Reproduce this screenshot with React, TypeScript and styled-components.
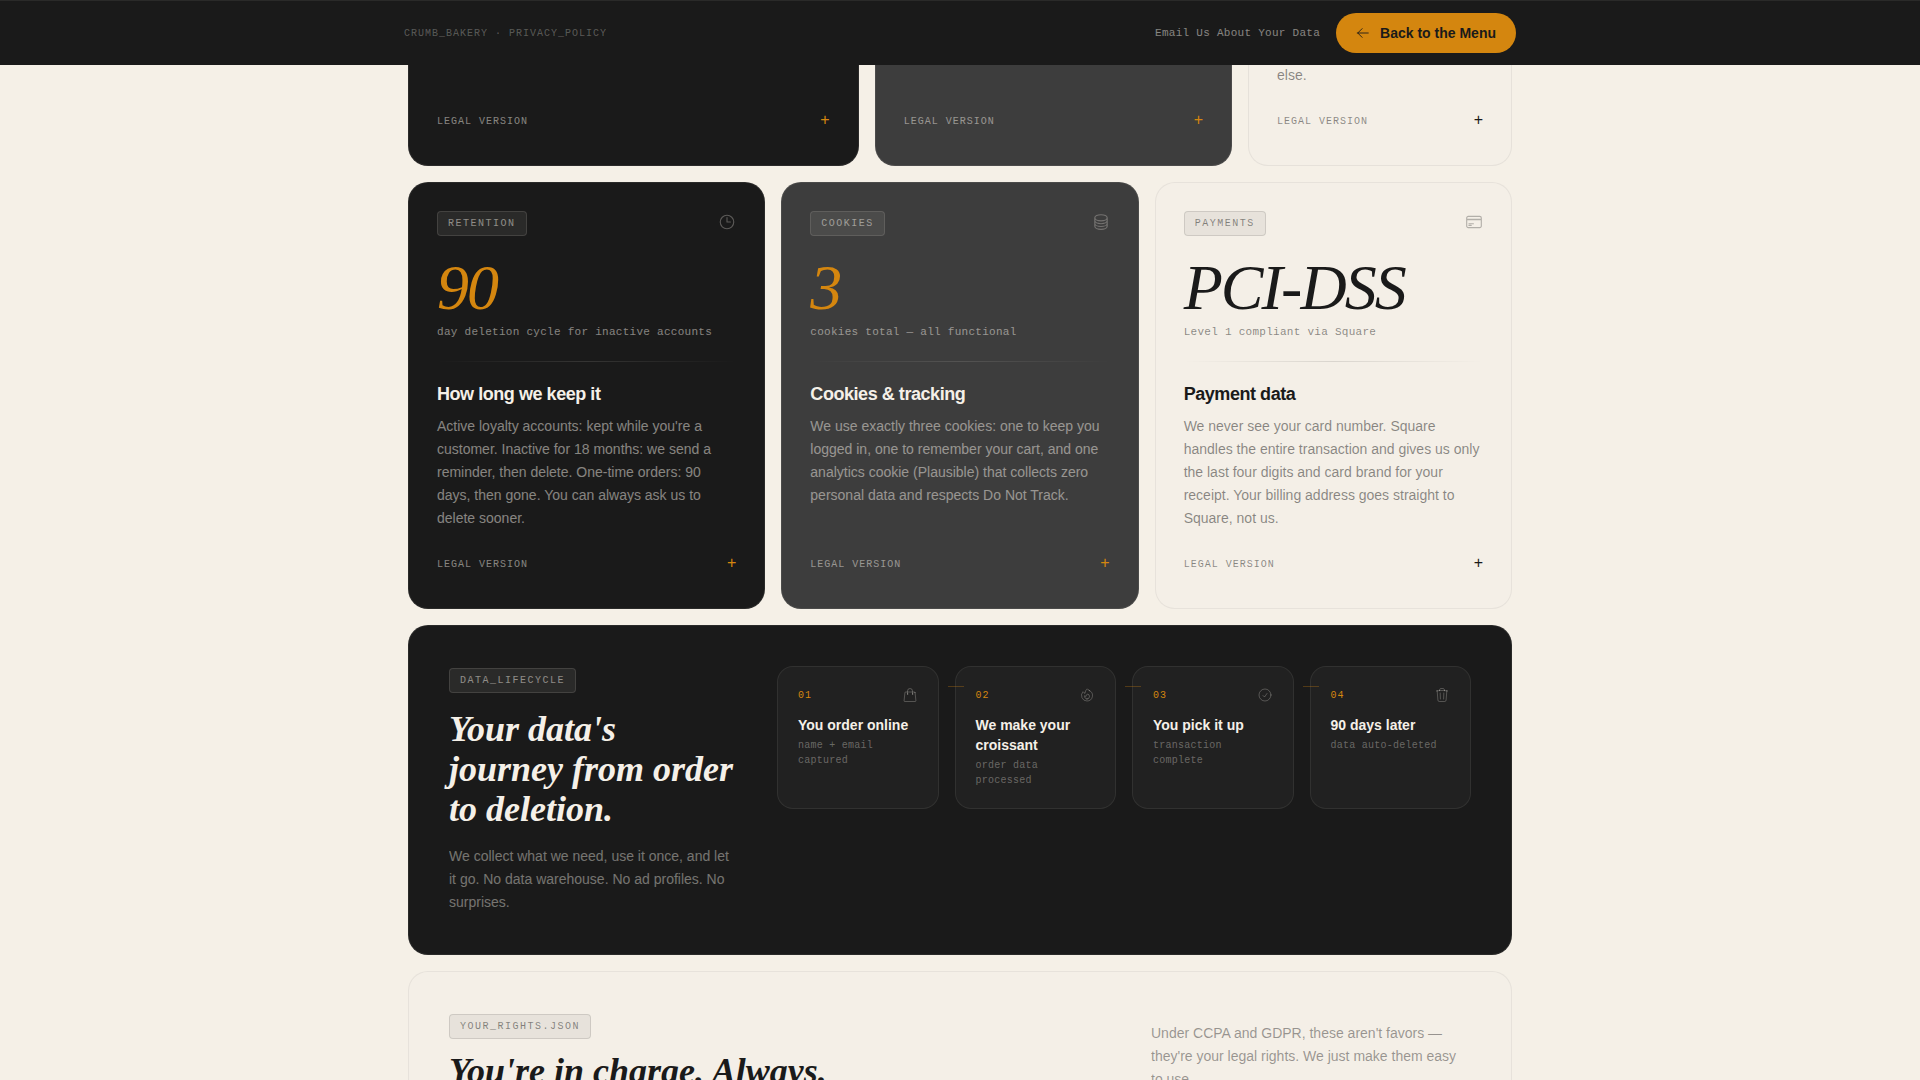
import React from "react";
import styled, { createGlobalStyle, ThemeProvider, css } from "styled-components";
import type { IconType } from "react-icons";
import {
  HiOutlineArrowLeft,
  HiOutlineCheckCircle,
  HiOutlineCircleStack,
  HiOutlineClock,
  HiOutlineCreditCard,
  HiOutlineFire,
  HiOutlineShoppingBag,
  HiOutlineTrash,
} from "react-icons/hi2";

type Tone = "dark" | "char" | "light";

const theme = {
  cream: "#f5f0e8",
  ink: "#1a1a1a",
  char: "#3d3d3d",
  amber: "#d4860f",
  sans: '"Liberation Sans", Arial, sans-serif',
  serif: '"Liberation Serif", "Times New Roman", serif',
  mono: '"Liberation Mono", "Courier New", monospace',
};

const tones = {
  dark: {
    bg: theme.ink,
    line: "rgba(245, 240, 232, 0.08)",
    title: theme.cream,
    accent: theme.amber,
    text: "rgba(245, 240, 232, 0.5)",
    tagBg: "rgba(245, 240, 232, 0.08)",
    tagLine: "rgba(245, 240, 232, 0.12)",
    icon: "rgba(245, 240, 232, 0.3)",
  },
  char: {
    bg: theme.char,
    line: "rgba(245, 240, 232, 0.08)",
    title: theme.cream,
    accent: theme.amber,
    text: "rgba(245, 240, 232, 0.5)",
    tagBg: "rgba(245, 240, 232, 0.08)",
    tagLine: "rgba(245, 240, 232, 0.12)",
    icon: "rgba(245, 240, 232, 0.3)",
  },
  light: {
    bg: "#f4efe7",
    line: "rgba(26, 26, 26, 0.06)",
    title: theme.ink,
    accent: theme.ink,
    text: "rgba(26, 26, 26, 0.5)",
    tagBg: "rgba(26, 26, 26, 0.06)",
    tagLine: "rgba(26, 26, 26, 0.12)",
    icon: "rgba(26, 26, 26, 0.3)",
  },
};

const GlobalStyle = createGlobalStyle`
  *, *::before, *::after { box-sizing: border-box; }
  body {
    margin: 0;
    background: #f5f0e7;
    color: ${theme.ink};
    font-family: ${theme.sans};
  }
  h2, h3, p, ol { margin: 0; padding: 0; }
  a { text-decoration: none; }
`;

const TopBar = styled.header`
  position: fixed;
  inset: 0 0 auto;
  z-index: 10;
  background: ${(p) => p.theme.ink};
  border-top: 1px solid rgba(245, 240, 232, 0.08);
`;

const TopBarInner = styled.div`
  display: flex;
  align-items: center;
  justify-content: space-between;
  max-width: 1160px;
  margin: 0 auto;
  padding: 12px 24px;
`;

const Crumb = styled.span`
  font: 10px/15px ${(p) => p.theme.mono};
  letter-spacing: 0.1em;
  color: rgba(245, 240, 232, 0.3);
`;

const Actions = styled.nav`
  display: flex;
  align-items: center;
  gap: 16px;
`;

const MailLink = styled.a`
  font: 11px/17px ${(p) => p.theme.mono};
  letter-spacing: 0.025em;
  color: rgba(245, 240, 232, 0.5);
`;

const MenuLink = styled.a`
  display: flex;
  align-items: center;
  gap: 10px;
  padding: 10px 20px;
  border-radius: 20px;
  background: ${(p) => p.theme.amber};
  color: ${(p) => p.theme.ink};
  font-size: 14px;
  line-height: 20px;
  font-weight: 700;
`;

const Bento = styled.main`
  display: grid;
  grid-template-columns: repeat(12, minmax(0, 1fr));
  gap: 16px;
  max-width: 1200px;
  margin: 0 auto;
  padding: 57px 48px 48px;
`;

const surface = css<{ $tone: Tone; $span: number }>`
  grid-column: span ${(p) => p.$span};
  background: ${(p) => tones[p.$tone].bg};
  border: 1px solid ${(p) => tones[p.$tone].line};
  border-radius: 20px;
`;

const Card = styled.article<{ $tone: Tone; $span: number }>`
  ${surface}
  display: flex;
  flex-direction: column;
  padding: 28px;
`;

/* Tail of a card whose upper part sits behind the top bar. */
const CardTail = styled(Card)`
  border-top: 0;
  border-radius: 0 0 20px 20px;
  padding-top: 7px;
`;

const CardHead = styled.div`
  display: flex;
  align-items: flex-start;
  justify-content: space-between;
  margin-bottom: 20px;
`;

const Tag = styled.span<{ $tone: Tone }>`
  display: inline-block;
  padding: 4px 10px;
  border: 1px solid ${(p) => tones[p.$tone].tagLine};
  border-radius: 4px;
  background: ${(p) => tones[p.$tone].tagBg};
  color: ${(p) => tones[p.$tone].text};
  font: 10px/15px ${(p) => p.theme.mono};
  letter-spacing: 0.15em;
`;

const IconSlot = styled.span<{ $tone: Tone }>`
  display: flex;
  padding: 2px 0;
  color: ${(p) => tones[p.$tone].icon};
`;

const Stat = styled.p<{ $tone: Tone }>`
  font: italic 64px/64px ${(p) => p.theme.serif};
  letter-spacing: -0.03em;
  color: ${(p) => tones[p.$tone].accent};
`;

const StatLabel = styled.p<{ $tone: Tone }>`
  margin-top: 4px;
  font: 11px/17px ${(p) => p.theme.mono};
  letter-spacing: 0.025em;
  color: ${(p) => tones[p.$tone].text};
`;

const Rule = styled.div<{ $tone: Tone }>`
  height: 1px;
  margin: 20px 0;
  background: linear-gradient(90deg, transparent, ${(p) => tones[p.$tone].tagLine}, transparent);
`;

const CardTitle = styled.h3<{ $tone: Tone }>`
  margin-bottom: 8px;
  font-size: 18px;
  line-height: 25px;
  letter-spacing: -0.025em;
  color: ${(p) => tones[p.$tone].title};
`;

const Body = styled.p<{ $tone: Tone; $soft?: boolean }>`
  font-size: 14px;
  line-height: 23px;
  color: ${(p) => tones[p.$tone].text};
  ${(p) => p.$soft && "opacity: 0.85;"}
`;

const LegalSpace = styled.div`
  flex: 1 0 17px;
`;

const LegalToggle = styled.button<{ $tone: Tone }>`
  display: flex;
  align-items: flex-end;
  justify-content: space-between;
  width: 100%;
  min-height: 33px;
  padding: 8px 0;
  border: 0;
  background: none;
  color: ${(p) => tones[p.$tone].text};
  font: 10px/15px ${(p) => p.theme.mono};
  letter-spacing: 0.1em;
  cursor: pointer;
`;

const Plus = styled.span<{ $tone: Tone }>`
  align-self: flex-start;
  font: 16px/15px ${(p) => p.theme.sans};
  letter-spacing: 0;
  color: ${(p) => tones[p.$tone].accent};
`;

const Panel = styled.section<{ $tone: Tone; $span: number; $end?: boolean }>`
  ${surface}
  display: flex;
  gap: 40px;
  padding: 40px;
  align-items: ${(p) => (p.$end ? "flex-end" : "flex-start")};
  justify-content: space-between;
`;

const Intro = styled.div<{ $narrow?: boolean }>`
  display: flex;
  flex-direction: column;
  align-items: flex-start;
  padding-top: 2px;
  ${(p) => p.$narrow && "flex: 0 0 288px;"}
`;

const Headline = styled.h2<{ $tone: Tone; $top: number }>`
  margin-top: ${(p) => p.$top}px;
  font: italic 700 36px/40px ${(p) => p.theme.serif};
  color: ${(p) => tones[p.$tone].title};
`;

const IntroText = styled(Body)`
  margin-top: 16px;
`;

const Aside = styled.div`
  flex: 0 0 320px;
`;

const Steps = styled.ol`
  flex: 1;
  display: grid;
  grid-template-columns: repeat(4, minmax(0, 1fr));
  gap: 16px;
  list-style: none;
`;

const Step = styled.li`
  position: relative;
  padding: 20px;
  border: 1px solid rgba(245, 240, 232, 0.08);
  border-radius: 16px;
  background: rgba(255, 255, 255, 0.03);

  /* Connector from the previous step. */
  & + &::before {
    content: "";
    position: absolute;
    top: 19px;
    left: -8px;
    width: 16px;
    height: 1px;
    background: ${(p) => p.theme.amber};
    opacity: 0.3;
  }
`;

const StepHead = styled.div`
  display: flex;
  align-items: flex-end;
  justify-content: space-between;
  margin-bottom: 12px;
  font: 10px/15px ${(p) => p.theme.mono};
  letter-spacing: 0.1em;
  color: ${(p) => p.theme.amber};
`;

const StepIcon = styled.span`
  display: flex;
  color: rgba(245, 240, 232, 0.25);
`;

const StepTitle = styled.h3`
  margin-bottom: 3px;
  font-size: 14px;
  line-height: 20px;
  color: ${(p) => p.theme.cream};
`;

const StepNote = styled.p`
  font: 10px/15px ${(p) => p.theme.mono};
  letter-spacing: 0.025em;
  color: rgba(245, 240, 232, 0.35);
`;

function Legal({ tone }: { tone: Tone }) {
  return (
    <>
      <LegalSpace />
      <LegalToggle type="button" aria-expanded={false} $tone={tone}>
        LEGAL VERSION
        <Plus $tone={tone}>+</Plus>
      </LegalToggle>
    </>
  );
}

const topics: {
  tone: Tone;
  tag: string;
  icon: IconType;
  stat: string;
  label: string;
  title: string;
  body: string;
}[] = [
  {
    tone: "dark",
    tag: "RETENTION",
    icon: HiOutlineClock,
    stat: "90",
    label: "day deletion cycle for inactive accounts",
    title: "How long we keep it",
    body: "Active loyalty accounts: kept while you're a customer. Inactive for 18 months: we send a reminder, then delete. One-time orders: 90 days, then gone. You can always ask us to delete sooner.",
  },
  {
    tone: "char",
    tag: "COOKIES",
    icon: HiOutlineCircleStack,
    stat: "3",
    label: "cookies total — all functional",
    title: "Cookies & tracking",
    body: "We use exactly three cookies: one to keep you logged in, one to remember your cart, and one analytics cookie (Plausible) that collects zero personal data and respects Do Not Track.",
  },
  {
    tone: "light",
    tag: "PAYMENTS",
    icon: HiOutlineCreditCard,
    stat: "PCI-DSS",
    label: "Level 1 compliant via Square",
    title: "Payment data",
    body: "We never see your card number. Square handles the entire transaction and gives us only the last four digits and card brand for your receipt. Your billing address goes straight to Square, not us.",
  },
];

const steps: { icon: IconType; title: string; note: string }[] = [
  { icon: HiOutlineShoppingBag, title: "You order online", note: "name + email captured" },
  { icon: HiOutlineFire, title: "We make your croissant", note: "order data processed" },
  { icon: HiOutlineCheckCircle, title: "You pick it up", note: "transaction complete" },
  { icon: HiOutlineTrash, title: "90 days later", note: "data auto-deleted" },
];

export default function App() {
  return (
    <ThemeProvider theme={theme}>
      <GlobalStyle />
      <TopBar>
        <TopBarInner>
          <Crumb>CRUMB_BAKERY · PRIVACY_POLICY</Crumb>
          <Actions>
            <MailLink href="#email">Email Us About Your Data</MailLink>
            <MenuLink href="#menu">
              <HiOutlineArrowLeft size={14} strokeWidth={1.5} aria-hidden />
              Back to the Menu
            </MenuLink>
          </Actions>
        </TopBarInner>
      </TopBar>

      <Bento>
        <CardTail $tone="dark" $span={5}>
          <Legal tone="dark" />
        </CardTail>
        <CardTail $tone="char" $span={4}>
          <Legal tone="char" />
        </CardTail>
        <CardTail $tone="light" $span={3}>
          <Body $tone="light">else.</Body>
          <Legal tone="light" />
        </CardTail>

        {topics.map(({ tone, tag, icon: Icon, stat, label, title, body }) => (
          <Card key={tag} $tone={tone} $span={4}>
            <CardHead>
              <Tag $tone={tone}>{tag}</Tag>
              <IconSlot $tone={tone}>
                <Icon size={18} strokeWidth={1.5} aria-hidden />
              </IconSlot>
            </CardHead>
            <Stat $tone={tone}>{stat}</Stat>
            <StatLabel $tone={tone}>{label}</StatLabel>
            <Rule $tone={tone} />
            <CardTitle $tone={tone}>{title}</CardTitle>
            <Body $tone={tone}>{body}</Body>
            <Legal tone={tone} />
          </Card>
        ))}

        <Panel $tone="dark" $span={12}>
          <Intro $narrow>
            <Tag $tone="dark">DATA_LIFECYCLE</Tag>
            <Headline $tone="dark" $top={16}>
              Your data's journey from order to deletion.
            </Headline>
            <IntroText $tone="dark" $soft>
              We collect what we need, use it once, and let it go. No data warehouse. No ad
              profiles. No surprises.
            </IntroText>
          </Intro>
          <Steps>
            {steps.map(({ icon: Icon, title, note }, i) => (
              <Step key={title}>
                <StepHead>
                  {`0${i + 1}`}
                  <StepIcon>
                    <Icon size={16} strokeWidth={1.5} aria-hidden />
                  </StepIcon>
                </StepHead>
                <StepTitle>{title}</StepTitle>
                <StepNote>{note}</StepNote>
              </Step>
            ))}
          </Steps>
        </Panel>

        <Panel $tone="light" $span={12} $end>
          <Intro>
            <Tag $tone="light">YOUR_RIGHTS.JSON</Tag>
            <Headline $tone="light" $top={12}>
              You're in charge. Always.
            </Headline>
          </Intro>
          <Aside>
            <Body $tone="light" $soft>
              Under CCPA and GDPR, these aren't favors — they're your legal rights. We just make
              them easy to use.
            </Body>
          </Aside>
        </Panel>
      </Bento>
    </ThemeProvider>
  );
}
